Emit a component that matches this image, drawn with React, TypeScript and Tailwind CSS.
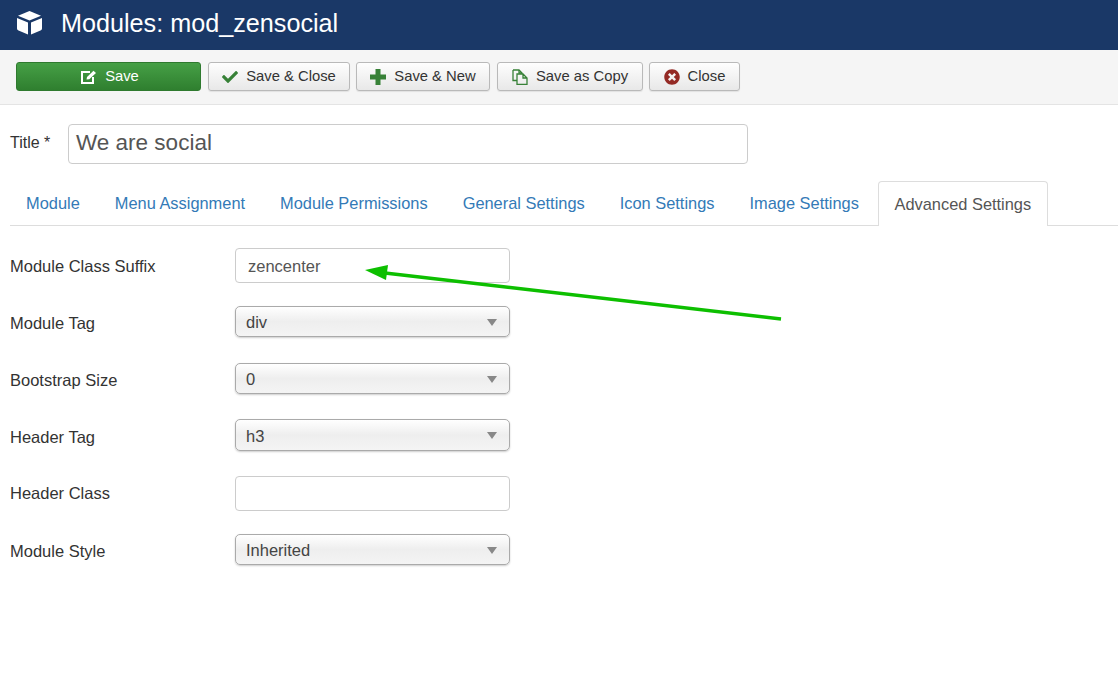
import { FaCheck, FaTimesCircle } from "react-icons/fa";

const tabs = ["Module", "Menu Assignment", "Module Permissions", "General Settings", "Icon Settings", "Image Settings"];

function ToolButton({ icon, label, width }: { icon: React.ReactNode; label: string; width: string }) {
  return (
    <button className={`${width} h-[29px] flex items-center justify-center gap-[8px] rounded-[3px] border border-[#b9b9b9] bg-gradient-to-b from-[#fefefe] to-[#e8e8e8] text-[14.8px] text-[#333333] shadow-[0_1px_1px_rgba(0,0,0,0.08)]`}>
      {icon}
      <span>{label}</span>
    </button>
  );
}

function TextRow({ label, value, top, labelPad = "pt-[2px]" }: { label: string; value: string; top: string; labelPad?: string }) {
  return (
    <div className={`flex items-center ${top}`}>
      <label className={`w-[225px] ${labelPad} text-[16.5px] text-[#333333]`}>{label}</label>
      <div className="w-[275px] h-[35px] flex items-center rounded-[4px] border border-[#cccccc] bg-white pl-[12px] pt-[2px] text-[16.5px] text-[#555555]">
        {value}
      </div>
    </div>
  );
}

function SelectRow({ label, value, top, height = "h-[31px]" }: { label: string; value: string; top: string; height?: string }) {
  return (
    <div className={`flex items-center ${top}`}>
      <label className="w-[225px] pt-[4px] text-[16.5px] text-[#333333]">{label}</label>
      <div className={`relative w-[275px] ${height} flex items-center rounded-[5px] border border-[#aaaaaa] bg-gradient-to-b from-white via-[#eeeeee] to-[#f4f4f4] pl-[10px] pt-[2px] text-[16.5px] text-[#444444] shadow-[0_1px_2px_rgba(0,0,0,0.2)]`}>
        {value}
        <span className="absolute right-[12px] top-[12px] h-0 w-0 border-x-[5px] border-t-[7px] border-x-transparent border-t-[#888888]" />
      </div>
    </div>
  );
}

export default function App() {
  return (
    <div className="relative min-h-[677px] bg-white font-['Liberation_Sans',Arial,sans-serif] overflow-hidden">
      {/* Title bar */}
      <div className="h-[50px] flex items-center bg-[#1a3867] pl-[17px] text-white">
        <svg width="25" height="24" viewBox="0 0 25 24" fill="currentColor" className="mb-[5px]">
          <path d="M12.5 0 L24 4.8 L12.5 9.6 L1 4.8 Z" />
          <path d="M0 7 L11 11.6 L11 23.5 L1.5 19.6 Q0 19 0 17.5 Z" />
          <path d="M25 7 L14 11.6 L14 23.5 L23.5 19.6 Q25 19 25 17.5 Z" />
        </svg>
        <h1 className="ml-[19px] mb-[2px] text-[25.2px] font-normal">Modules: mod_zensocial</h1>
      </div>

      {/* Toolbar */}
      <div className="h-[55px] flex items-start gap-[6px] border-b border-[#e4e4e4] bg-[#f5f5f5] pl-[16px] pt-[12px]">
        <button className="w-[185px] h-[29px] flex items-center justify-center gap-[8px] rounded-[3px] border border-[#2f7a2f] bg-gradient-to-b from-[#46a046] to-[#2f7f2f] pl-[3px] text-[14.8px] text-white">
          <svg width="16" height="14" viewBox="0 0 16 14" fill="none" stroke="currentColor" strokeWidth="2">
            <path d="M9 2 H1 V13 H12 V7" />
            <path d="M5.5 9.5 L6 7 L12.5 0.8 L15 3 L8.3 9.2 Z" fill="currentColor" stroke="none" />
          </svg>
          <span>Save</span>
        </button>
        <ToolButton width="w-[142px] ml-px" label="Save & Close" icon={<FaCheck className="text-[16px] text-[#378137]" />} />
        <ToolButton
          width="w-[134px]"
          label="Save & New"
          icon={
            <svg width="16" height="16" viewBox="0 0 16 16" fill="#378137">
              <path d="M5.5 0 H10.5 V5.5 H16 V10.5 H10.5 V16 H5.5 V10.5 H0 V5.5 H5.5 Z" />
            </svg>
          }
        />
        <ToolButton
          width="w-[146px] ml-px"
          label="Save as Copy"
          icon={
            <svg width="16" height="16" viewBox="0 0 16 16" fill="none" stroke="#378137" strokeWidth="1.3">
              <path d="M1 1 H7 L10 4 V5 M1 1 V11.5 H5" />
              <path d="M7 1 V4 H10" />
              <path d="M5 5 H11 L15 9 V15.4 H5 Z M11 5 V9 H15" />
            </svg>
          }
        />
        <ToolButton width="w-[91px]" label="Close" icon={<FaTimesCircle className="text-[16px] text-[#942a25]" />} />
      </div>

      {/* Title field */}
      <div className="flex items-center pl-[10px] pt-[19px]">
        <label className="w-[58px] text-[16px] text-[#333333] mb-[3px]">Title *</label>
        <div className="w-[680px] h-[40px] flex items-center rounded-[4px] border border-[#cccccc] bg-white pl-[7px] pb-[2px] text-[22.5px] text-[#555555]">
          We are social
        </div>
      </div>

      {/* Tabs */}
      <div className="ml-[10px] mt-[17px] flex h-[45px] items-end border-b border-[#dddddd]">
        {tabs.map((tab) => (
          <a key={tab} className="mr-[3px] px-[16px] h-[44px] flex items-center text-[16.4px] text-[#337ab7]">
            {tab}
          </a>
        ))}
        <a className="-mb-px h-[45px] w-[170px] flex items-center justify-center rounded-t-[4px] border border-b-0 border-[#dddddd] bg-white text-[16.4px] text-[#555555]">
          Advanced Settings
        </a>
      </div>

      {/* Form */}
      <div className="pl-[10px] pt-[22px]">
        <TextRow label="Module Class Suffix" value="zencenter" top="mt-0" />
        <SelectRow label="Module Tag" value="div" top="mt-[23px]" />
        <SelectRow label="Bootstrap Size" value="0" top="mt-[26px]" />
        <SelectRow label="Header Tag" value="h3" top="mt-[25px]" height="h-[32px]" />
        <TextRow label="Header Class" value="" top="mt-[25px]" labelPad="pt-0" />
        <SelectRow label="Module Style" value="Inherited" top="mt-[23px]" />
      </div>

      {/* Annotation arrow */}
      <svg className="absolute left-0 top-0 pointer-events-none" width="1118" height="677">
        <line x1="781" y1="319" x2="385" y2="273" stroke="#0dbf00" strokeWidth="3.5" />
        <polygon points="365,270 388,265 386,280" fill="#0dbf00" />
      </svg>
    </div>
  );
}
